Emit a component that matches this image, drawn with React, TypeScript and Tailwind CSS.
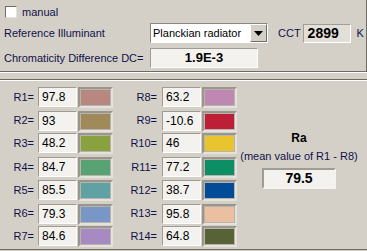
import React from 'react'

const left = [
  { k: 'R1', v: '97.8', c: '#b8877f' },
  { k: 'R2', v: '93', c: '#a08a5a' },
  { k: 'R3', v: '48.2', c: '#89a13e' },
  { k: 'R4', v: '84.7', c: '#58a274' },
  { k: 'R5', v: '85.5', c: '#60a2a4' },
  { k: 'R6', v: '79.3', c: '#7897c7' },
  { k: 'R7', v: '84.6', c: '#a68ac1' },
]
const right = [
  { k: 'R8', v: '63.2', c: '#bf88b3' },
  { k: 'R9', v: '-10.6', c: '#bd1f36' },
  { k: 'R10', v: '46', c: '#e8c52e' },
  { k: 'R11', v: '77.2', c: '#0d8f66' },
  { k: 'R12', v: '38.7', c: '#024c97' },
  { k: 'R13', v: '95.8', c: '#eabfa2' },
  { k: 'R14', v: '64.8', c: '#576337' },
]
const rowH = ['h-[24px]', 'h-[23px]', 'h-[24px]', 'h-[23px]', 'h-[24px]', 'h-[23px]', 'h-[23px]']

function Field({ v, w }: { v: string; w: string }) {
  return (
    <div className={`${w} shrink-0 h-[20px] border-t border-l border-t-[#a09c94] border-l-[#a09c94] border-b border-r border-b-white border-r-white bg-[#f3f2ee] flex items-center pl-[3px] text-[12px] text-black whitespace-nowrap`}>
      {v}
    </div>
  )
}

function Swatch({ c }: { c: string }) {
  return (
    <div className="w-[35px] shrink-0 h-[21px] border-2 border-t-[#9a968e] border-l-[#9a968e] border-b-[#e4e2dc] border-r-[#e4e2dc] p-[1px] bg-[#b8b4ac]">
      <div className="w-full h-full" style={{ backgroundColor: c }} />
    </div>
  )
}

function Column({ rows, labelW, gap }: { rows: typeof left; labelW: string; gap: string }) {
  return (
    <div className="flex flex-col shrink-0">
      {rows.map((r, i) => (
        <div key={r.k} className={`${rowH[i]} flex items-start`}>
          <div className={`${labelW} shrink-0 h-[20px] flex items-center justify-end text-[11px] text-[#10104a] whitespace-nowrap`}>{r.k}=</div>
          <div className={`${gap} shrink-0`} />
          <Field v={r.v} w="w-[39px]" />
          <div className="w-[1px] shrink-0" />
          <Swatch c={r.c} />
        </div>
      ))}
    </div>
  )
}

export default function App() {
  return (
    <div className="w-[367px] h-[251px] bg-[#d4d0c8] overflow-hidden" style={{ fontFamily: '"Liberation Sans", Arial, sans-serif' }}>
      {/* top panel */}
      <div className="h-[73px] border-b border-b-white">
        <div className="h-[72px] border-b border-r border-[#6f6c66] pl-[4px] pt-[5px] whitespace-nowrap">
          <div className="flex items-center h-[14px]">
            <div className="w-[12px] h-[12px] ml-[1px] shrink-0 bg-white border border-t-[#6f6c66] border-l-[#6f6c66] border-b-[#e4e2dc] border-r-[#e4e2dc]" />
            <span className="ml-[5px] text-[11px] text-[#10104a]">manual</span>
          </div>
          <div className="flex items-center h-[20px] mt-[4px]">
            <span className="w-[146px] shrink-0 text-[11px] text-[#10104a]">Reference Illuminant</span>
            <div className="w-[118px] shrink-0 h-[20px] flex border border-t-[#8a867e] border-l-[#8a867e] border-b-white border-r-white">
              <div className="flex-1 bg-white flex items-center pl-[2px] text-[11px] text-black">Planckian radiator</div>
              <div className="w-[17px] bg-[#d4d0c8] border border-t-white border-l-white border-b-[#6f6c66] border-r-[#6f6c66] flex items-center justify-center">
                <svg width="9" height="5" viewBox="0 0 9 5"><path d="M0 0h9L4.5 5z" fill="#000" /></svg>
              </div>
            </div>
            <span className="ml-[10px] text-[11px] text-[#10104a]">CCT</span>
            <div className="ml-[2px] shrink-0 w-[48px] h-[19px] border border-t-[#a09c94] border-l-[#a09c94] border-b-white border-r-white bg-[#e2dfd8] flex items-center pl-[4px] text-[14px] font-bold text-black">2899</div>
            <span className="ml-[6px] text-[11px] text-[#10104a]">K</span>
          </div>
          <div className="flex items-center h-[20px] mt-[5px]">
            <span className="w-[146px] shrink-0 text-[11px] text-[#10104a]">Chromaticity Difference DC=</span>
            <div className="w-[108px] shrink-0 h-[20px] border border-t-[#a09c94] border-l-[#a09c94] border-b-white border-r-white bg-[#f3f2ee] flex items-center justify-center text-[13px] font-bold text-black">1.9E-3</div>
          </div>
        </div>
      </div>
      {/* lower panel */}
      <div className="mt-[6px] h-[171px] border-t border-t-[#6f6c66] border-b border-b-[#6f6c66]">
        <div className="h-full border-t border-t-white flex pt-[6px]">
          <Column rows={left} labelW="w-[34px]" gap="w-[4px]" />
          <div className="w-[8px] shrink-0" />
          <Column rows={right} labelW="w-[36px]" gap="w-[5px]" />
          <div className="flex-1 flex flex-col items-center pt-[43px] pr-[6px] whitespace-nowrap">
            <div className="text-[12px] font-bold text-black leading-[16px]">Ra</div>
            <div className="text-[11px] text-[#10104a] mt-[3px] leading-[14px]">(mean value of R1 - R8)</div>
            <div className="mt-[5px] w-[74px] h-[21px] border-2 border-t-[#a09c94] border-l-[#a09c94] border-b-[#f4f3ef] border-r-[#f4f3ef] bg-[#f3f2ee] flex items-center justify-center text-[14px] font-bold text-black">79.5</div>
          </div>
        </div>
      </div>
    </div>
  )
}
